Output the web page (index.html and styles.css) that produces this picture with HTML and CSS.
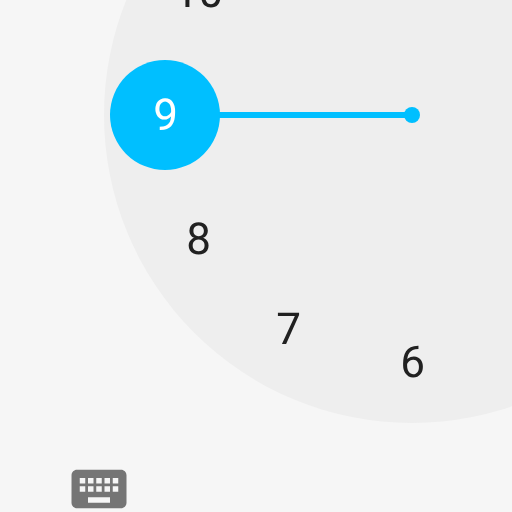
FILE: index.html
```html
<!DOCTYPE html>
<html lang="en">
<head>
<meta charset="utf-8">
<title>Time picker</title>
<link rel="stylesheet" href="styles.css">
</head>
<body>
<main class="picker">
<div class="dial">
<div class="hand"></div>
<div class="pivot"></div>
<span class="hour h10">10</span>
<span class="hour h9 selected">9</span>
<span class="hour h8">8</span>
<span class="hour h7">7</span>
<span class="hour h6">6</span>
</div>
<button class="keyboard" aria-label="Keyboard">
<svg width="66" height="66" viewBox="0 0 24 24"><path fill="#757575" d="M20 5H4c-1.1 0-1.99.9-1.99 2L2 17c0 1.1.9 2 2 2h16c1.1 0 2-.9 2-2V7c0-1.1-.9-2-2-2zm-9 3h2v2h-2V8zm0 3h2v2h-2v-2zM8 8h2v2H8V8zm0 3h2v2H8v-2zm-1 2H5v-2h2v2zm0-3H5V8h2v2zm9 7H8v-2h8v2zm0-4h-2v-2h2v2zm0-3h-2V8h2v2zm3 3h-2v-2h2v2zm0-3h-2V8h2v2z"/></svg>
</button>
</main>
</body>
</html>
```
FILE: styles.css
```css
body { margin: 0; background: #f6f6f6; font-family: Roboto, sans-serif; }
.picker { display: flex; flex-direction: column; justify-content: flex-end; align-items: flex-start; gap: 33px; width: 512px; height: 512px; overflow: hidden; }
.dial { position: relative; flex: none; margin-left: 104px; width: 616px; height: 616px; border-radius: 50%; background: #eee; }
.hand { position: absolute; left: 61px; top: 305px; width: 247px; height: 6px; background: #00bfff; }
.pivot { position: absolute; left: 300px; top: 300px; width: 16px; height: 16px; border-radius: 50%; background: #00bfff; }
.hour { position: absolute; box-sizing: border-box; width: 110px; height: 110px; padding-left: 1px; line-height: 110px; margin: -55px 0 0 -55px; border-radius: 50%; text-align: center; font-size: 44px; color: #212121; will-change: transform; text-rendering: geometricPrecision; }
.selected { background: #00bfff; color: #fff; }
.h10 { left: 94px; top: 185px; }
.h9 { left: 61px; top: 308px; }
.h8 { left: 94px; top: 432px; }
.h7 { left: 184px; top: 522px; }
.h6 { left: 308px; top: 555px; }
.keyboard { flex: none; margin: 0 0 -10px 66px; width: 66px; height: 66px; padding: 0; border: 0; background: none; }
.keyboard svg { display: block; }
```
